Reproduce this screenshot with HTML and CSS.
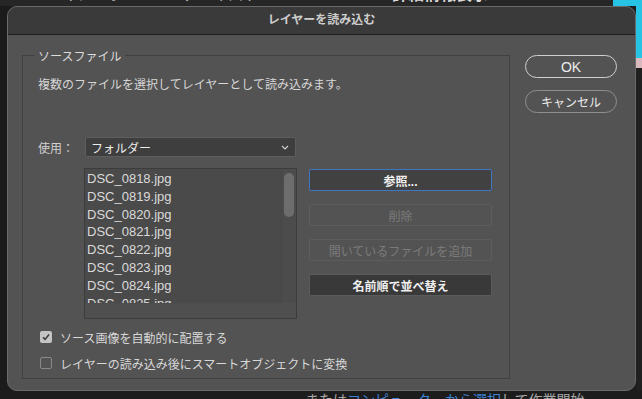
FILE: index.html
```html
<!DOCTYPE html>
<html lang="ja">
<head>
  <meta charset="UTF-8">
  <title>レイヤーを読み込む</title>
  <meta name="viewport" content="width=device-width, initial-scale=1.0">
  <link rel="stylesheet" href="styles.css">
</head>
<body>
  <div class="desk">
    <div class="desk-top">
      <div class="frag-row">
        <span class="frag f1">イメージ</span>
        <span class="frag f2">テ</span>
        <span class="frag f3">キスト</span>
        <span class="frag f4">詳細情報表示</span>
      </div>
      <div class="desk-cyan"></div>
    </div>

    <div class="desk-left"></div>

    <div class="dialog">
      <div class="titlebar">レイヤーを読み込む</div>

      <div class="dialog-body">
        <div class="group">
          <div class="legend">ソースファイル</div>
          <p class="desc">複数のファイルを選択してレイヤーとして読み込みます。</p>

          <div class="use-row">
            <span class="use-label">使用：</span>
            <div class="select">
              <span>フォルダー</span>
              <svg class="chev" width="8" height="5" viewBox="0 0 8 5"><polyline points="1,1 4,4 7,1" fill="none" stroke="#cfcfcf" stroke-width="1.1"/></svg>
            </div>
          </div>

          <div class="files-row">
            <div class="filelist">
              <ul class="items">
                <li>DSC_0818.jpg</li>
                <li>DSC_0819.jpg</li>
                <li>DSC_0820.jpg</li>
                <li>DSC_0821.jpg</li>
                <li>DSC_0822.jpg</li>
                <li>DSC_0823.jpg</li>
                <li>DSC_0824.jpg</li>
                <li>DSC_0825.jpg</li>
              </ul>
              <div class="vscroll"><div class="thumb"></div></div>
              <div class="hscroll"></div>
              <div class="corner"></div>
            </div>

            <div class="file-btns">
              <button class="fbtn focus">参照...</button>
              <button class="fbtn off">削除</button>
              <button class="fbtn off">開いているファイルを追加</button>
              <button class="fbtn dark">名前順で並べ替え</button>
            </div>
          </div>

          <label class="check">
            <span class="box on">
              <svg width="12" height="12" viewBox="0 0 12 12"><polyline points="3,6.2 5.1,8.4 9,3.6" fill="none" stroke="#3a3a3a" stroke-width="1.6"/></svg>
            </span>
            ソース画像を自動的に配置する
          </label>
          <label class="check">
            <span class="box"></span>
            レイヤーの読み込み後にスマートオブジェクトに変換
          </label>
        </div>

        <div class="side-btns">
          <button class="pill ok">OK</button>
          <button class="pill">キャンセル</button>
        </div>
      </div>
    </div>

    <div class="desk-right">
      <div class="cyan"></div>
      <div class="pink"></div>
    </div>

    <div class="desk-bottom">
      または<span class="link">コンピューターから選択</span>して作業開始
    </div>
  </div>
</body>
</html>
```

FILE: styles.css
```css
* { box-sizing: border-box; }
html, body { margin: 0; padding: 0; }
body { background: #1c1c1c; font-family: "Liberation Sans", "Noto Sans CJK JP", sans-serif; color: #d8d8d8; width: 642px; height: 399px; overflow: hidden; }

.desk { display: grid; grid-template-columns: 7px 629px 6px; grid-template-rows: 6px 385px 8px; }

/* backdrop bits */
.desk-top { grid-column: 1 / 4; display: flex; background: #262626; overflow: hidden; }
.frag-row { flex: 1; position: relative; overflow: hidden; }
.frag { position: absolute; top: -14px; font-size: 16px; line-height: 18px; color: #b9b9b9; }
.f1 { left: 62px; }
.f2 { left: 182px; }
.f3 { left: 212px; }
.f4 { left: 392px; color: #dadada; font-weight: bold; }
.desk-cyan { width: 29px; background: #27c3e4; }
.desk-left { background: #1b1b1b; }
.desk-right { display: flex; flex-direction: column; background: #202020; }
.cyan { height: 52px; background: #27c3e4; }
.pink { height: 10px; background: #d9b9bd; }
.desk-bottom { grid-column: 1 / 4; padding-left: 305px; margin-top: 1px; font-size: 14px; line-height: 16px; color: #a8a8a8; white-space: nowrap; }
.desk-bottom .link { color: #3d82d4; }

/* dialog window */
.dialog { background: #535353; border: 1px solid #6a6a6a; border-radius: 10px; overflow: hidden; display: flex; flex-direction: column; }
.titlebar { height: 28px; background: #3a3a3a; border-bottom: 1px solid #1d1d1d; text-align: center; font-size: 12px; font-weight: bold; line-height: 27px; color: #cdcdcd; }
.dialog-body { display: flex; gap: 15px; padding: 20px 18px 0 14px; }

/* group box */
.group { width: 488px; height: 324px; border: 1px solid #404040; padding: 0 15px; display: flex; flex-direction: column; }
.legend { align-self: flex-start; margin: -7px 0 0 -4px; padding: 0 4px; background: #535353; font-size: 12px; line-height: 16px; color: #dcdcdc; }
.desc { margin: 12px 0 0; font-size: 12px; line-height: 16px; color: #d6d6d6; }

.use-row { display: flex; align-items: center; margin-top: 44px; height: 20px; }
.use-label { width: 47px; font-size: 12px; color: #d0d0d0; }
.select { width: 211px; height: 20px; display: flex; align-items: center; justify-content: space-between; padding: 0 6px 0 5px; background: #3e3e3e; border: 1px solid #5e5e5e; border-radius: 2px; font-size: 12px; color: #ececec; }
.chev { margin-top: 1px; }

.files-row { display: flex; margin-top: 11px; }
.filelist { margin-left: 46px; width: 213px; height: 151px; border: 1px solid #3c3c3c; background: #4a4a4a; display: grid; grid-template-columns: 1fr 15px; grid-template-rows: 134px 1fr; }
.items { list-style: none; margin: 0; padding: 1px 0 0 2px; overflow: hidden; font-size: 13px; line-height: 17.8px; color: #dadada; }
.vscroll { background: #4c4c4c; border-left: 1px solid #474747; padding: 4px 2px 0 2px; }
.thumb { height: 44px; border-radius: 5px; background: #6d6d6d; }
.hscroll { background: #4f4f4f; border-top: 1px solid #4d4d4d; }
.corner { background: #4f4f4f; }

.file-btns { display: flex; flex-direction: column; gap: 13px; margin: 1px 0 0 12px; width: 183px; }
.fbtn { height: 22px; padding: 0; font-family: inherit; font-size: 12px; border-radius: 2px; border: 1px solid #5e5e5e; background: #3d3d3d; color: #f0f0f0; font-weight: bold; }
.fbtn.focus { border-color: #3f76c6; background: #414141; }
.fbtn.off { background: #535353; border-color: #5d5d5d; color: #7b7b7b; font-weight: normal; }
.fbtn.dark { background: #393939; border-color: #5b5b5b; }

.check { display: flex; align-items: center; gap: 8px; height: 16px; margin: 10px 0 0 2px; font-size: 12px; color: #d8d8d8; }
.box { width: 12px; height: 12px; border-radius: 2px; border: 1px solid #8a8a8a; }
.box.on { border: none; background: #c4c4c4; display: flex; }

/* OK / cancel */
.side-btns { display: flex; flex-direction: column; gap: 12px; }
.pill { width: 92px; height: 23px; padding: 0; border-radius: 12px; background: transparent; border: 1.5px solid #8e8e8e; color: #ececec; font-family: inherit; font-size: 12px; }
.pill.ok { border-color: #cfcfcf; font-size: 14px; }
```
